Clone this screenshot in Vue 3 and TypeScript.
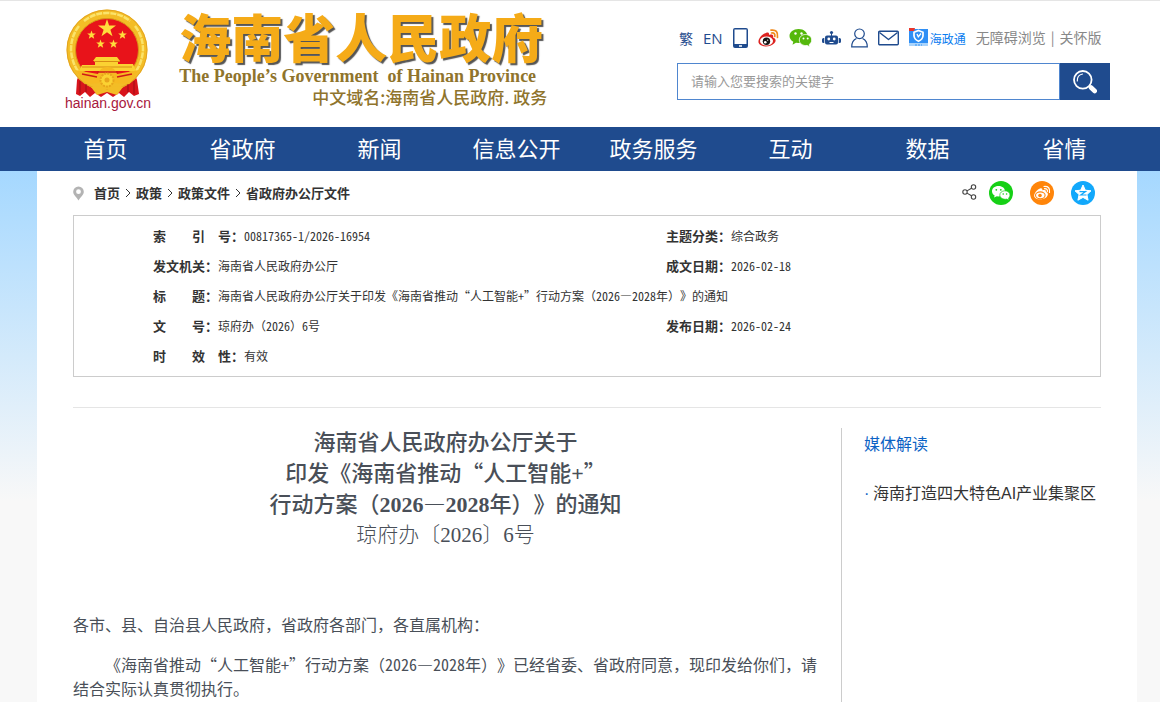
<script setup lang="ts">
import { ref } from 'vue'

interface Field {
  label: string
  value: string
  wide?: boolean
}

interface Run {
  text: string
  latin: boolean
}

const keyword = ref('')

const navItems: string[] = ['首页', '省政府', '新闻', '信息公开', '政务服务', '互动', '数据', '省情']

const crumbs: string[] = ['首页', '政策', '政策文件', '省政府办公厅文件']

const fieldRows: Field[][] = [
  [
    { label: '索　　引　号：', value: '00817365-1/2026-16954' },
    { label: '主题分类：', value: '综合政务' },
  ],
  [
    { label: '发文机关：', value: '海南省人民政府办公厅' },
    { label: '成文日期：', value: '2026-02-18' },
  ],
  [
    {
      label: '标　　题：',
      value: '海南省人民政府办公厅关于印发《海南省推动“人工智能+”行动方案（2026—2028年）》的通知',
      wide: true,
    },
  ],
  [
    { label: '文　　号：', value: '琼府办（2026）6号' },
    { label: '发布日期：', value: '2026-02-24' },
  ],
  [{ label: '时　　效　性：', value: '有效', wide: true }],
]

const titleLines: string[] = [
  '海南省人民政府办公厅关于',
  '印发《海南省推动“人工智能+”',
  '行动方案（2026—2028年）》的通知',
]

const docNumber = '琼府办〔2026〕6号'

const bodyText =
  '《海南省推动“人工智能+”行动方案（2026—2028年）》已经省委、省政府同意，现印发给你们，请结合实际认真贯彻执行。'

// Splits a text into Chinese runs and half-width runs of digits and signs.
function runs(text: string): Run[] {
  return text
    .split(/([0-9+][0-9/-]*)/)
    .filter((part) => part !== '')
    .map((part) => ({ text: part, latin: /^[0-9+]/.test(part) }))
}
</script>

<template>
  <div class="page" lang="zh-CN">
    <header class="header">
      <div class="wrap header-inner">
        <a class="brand" href="#">
          <span class="emblem-box">
            <svg class="emblem" viewBox="65 9 84 88" aria-hidden="true">
              <path d="M80 72 L77 80 L76 94 L80 96 L85 92 L90 97 L95 93 L101 97 L107 93 L113 97 L119 93 L124 97 L129 92 L134 96 L139 94 L137 80 L134 72 Z" fill="#d8141c" />
              <circle cx="107" cy="50" r="35.5" fill="none" stroke="#f3bd26" stroke-width="10" />
              <circle cx="107" cy="50" r="40" fill="none" stroke="#d8931a" stroke-width="1" stroke-opacity="0.6" />
              <path d="M79 26 Q71 36 71 50 Q72 64 80 74 M135 26 Q143 36 143 50 Q142 64 134 74 M84 21 Q94 13 107 13 Q120 13 130 21" fill="none" stroke="#fbe36a" stroke-width="2.500" stroke-dasharray="6 1" />
              <circle cx="107" cy="50" r="31.5" fill="#e8131a" stroke="#d99418" stroke-width="1" />
              <path d="M107 19 L109.1 25.6 L116 25.6 L110.4 29.7 L112.5 36.3 L107 32.2 L101.500 36.300 L103.6 29.7 L98 25.6 L104.900 25.600 Z" fill="#ffdd3c" />
              <g fill="#ffdd3c">
                <path id="small-star" d="M91.500 30.500 L92.600 33.500 L95.800 33.600 L93.300 35.600 L94.200 38.700 L91.500 36.900 L88.800 38.700 L89.700 35.600 L87.200 33.600 L90.400 33.500 Z" />
                <use href="#small-star" x="31" />
                <use href="#small-star" x="9" y="9" />
                <use href="#small-star" x="22" y="9" />
              </g>
              <path d="M96 57 H117 L120 61 H118 V64 H133 L136 71 H79 L82 65 H95 V61 H93 Z" fill="#fbd232" />
              <path d="M94 61.500 H120 M82 67 H132" stroke="#d88d14" stroke-width="1" />
              <path d="M75 70 L98 74 A10 10 0 0 1 117 74 L139 70 L129 84 L114 83 L107 86 L100 83 L86 84 Z" fill="#f6b921" />
              <path d="M97 72 H118 M82 74 L97 77 M132 74 L117 77" stroke="#d01a18" stroke-width="1.500" fill="none" />
              <circle cx="107" cy="80" r="6.500" fill="#fbd232" stroke="#e8a51c" stroke-width="2" stroke-dasharray="2 1" />
              <circle cx="107" cy="80" r="2.500" fill="#e8a51c" />
              <path d="M91 87 L100 86 L107 90 L114 86 L123 87 L117 95 L107 92 L97 95 Z" fill="#f3bd26" />
              <path d="M80 81 V94 M86 84 V92 M128 84 V92 M134 81 V94" stroke="#9d0d14" stroke-width="1" />
            </svg>
            <span class="domain">hainan.gov.cn</span>
          </span>
          <span class="titles">
            <span class="title-zh">海南省人民政府</span>
            <span class="title-en">The People’s Government&nbsp; of Hainan Province</span>
            <span class="title-domain">中文域名:海南省人民政府. 政务</span>
          </span>
        </a>

        <div class="side">
          <div class="tools">
            <a class="tool-zh" href="#">繁</a>
            <a class="tool-en" href="#">EN</a>
            <a href="#" aria-label="移动版">
              <svg width="15" height="20" viewBox="0 0 15 20">
                <path fill="#1f4b8e" fill-rule="evenodd" d="M2 0 H13 Q15 0 15 2 V18 Q15 20 13 20 H2 Q0 20 0 18 V2 Q0 0 2 0 Z M1.500 1.500 V16 H13.500 V1.500 Z M6 17.300 V18.700 H9 V17.300 Z" />
              </svg>
            </a>
            <a href="#" aria-label="微博">
              <svg width="21" height="20" viewBox="0 0 21 20">
                <path d="M8 5 C10 4 11.500 5 11 7 C14 6 16 7 15 9.500 C18 10.500 18.500 13 16 15.500 C12 19.500 2 19.500 0.500 14.500 C0 11 4 6 8 5 Z" fill="#dc2320" />
                <ellipse cx="8.500" cy="13" rx="6.500" ry="4.500" fill="#fff" />
                <circle cx="8.500" cy="13.300" r="3.700" fill="#161616" />
                <circle cx="7.300" cy="14.200" r="1.300" fill="#fff" />
                <circle cx="9.700" cy="12.200" r="0.600" fill="#fff" />
                <path d="M13 2.200 Q20.500 1 19.500 9.500 M13.500 5 Q17.500 4.500 16.800 8.500" fill="none" stroke="#f08a1c" stroke-width="1.700" stroke-linecap="round" />
              </svg>
            </a>
            <a href="#" aria-label="微信">
              <svg width="23" height="20" viewBox="0 0 23 20">
                <path d="M9.500 1 C15 1 18.500 4.500 18.500 8 C18.500 12 15 15 9.500 15 L7 14.700 L3.500 16.800 L4.300 13.700 C2 12.500 0.500 10.400 0.500 8 C0.500 4 4.500 1 9.500 1 Z" fill="#55b80c" />
                <path d="M16.500 6.500 C20 6.500 22.700 8.800 22.700 12 C22.700 14 21.600 15.500 20.300 16.400 L20.800 18.800 L18.200 17.400 C14 18.200 10.300 15.700 10.300 12 C10.300 8.800 13 6.500 16.500 6.500 Z" fill="#55b80c" stroke="#fff" stroke-width="0.800" />
                <g fill="#fff">
                  <circle cx="6.500" cy="5.500" r="1.200" /><circle cx="12.500" cy="5.500" r="1.200" />
                  <circle cx="14.500" cy="10.500" r="1" /><circle cx="18.700" cy="10.500" r="1" />
                </g>
              </svg>
            </a>
            <a href="#" aria-label="智能机器人">
              <svg width="19" height="18" viewBox="0 0 19 18">
                <g fill="#1f4b8e">
                  <circle cx="9.500" cy="3.500" r="1.600" />
                  <path d="M9 4 H10 V7 H9 Z M5 6.500 H14 Q16 6.500 16 8.500 V13.500 Q16 15.500 14 15.500 H5 Q3 15.500 3 13.500 V8.500 Q3 6.500 5 6.500 Z" />
                  <path d="M2.300 9 V14 H1.500 Q0 14 0 12.500 V10.500 Q0 9 1.500 9 Z M16.700 9 H17.500 Q19 9 19 10.500 V12.500 Q19 14 17.500 14 H16.700 Z" />
                </g>
                <g fill="#fff"><circle cx="6.800" cy="10" r="1.400" /><circle cx="12.200" cy="10" r="1.400" /><path d="M7.500 13 H11.500 V14 H7.500 Z" /></g>
              </svg>
            </a>
            <a href="#" aria-label="个人中心">
              <svg width="17" height="20" viewBox="0 0 17 20">
                <g fill="none" stroke="#1f4b8e" stroke-width="1.200">
                  <circle cx="8.500" cy="5.800" r="4.800" />
                  <path d="M5.500 10.500 Q0.700 12.500 0.700 18.900 H16.300 Q16.300 12.500 11.500 10.500" />
                </g>
              </svg>
            </a>
            <a href="#" aria-label="邮箱">
              <svg width="21" height="16" viewBox="0 0 21 16">
                <g fill="none" stroke="#1f4b8e" stroke-width="1.400" stroke-linejoin="round">
                  <rect x="0.700" y="1.200" width="19.600" height="13.600" rx="1" />
                  <path d="M1.500 2.500 L10.500 9.500 L19.500 2.500" />
                </g>
              </svg>
            </a>
            <a class="app-link" href="#">
              <svg width="19" height="20" viewBox="0 0 19 20">
                <rect width="19" height="17" y="1" fill="#2f8ff5" />
                <path d="M0 15 H19 V18 H0 Z" fill="#a9d3fb" />
                <path d="M0 0 H6 L5 3 H0 Z" fill="#e8352c" />
                <path d="M9.500 2.500 L14 4.300 V8 Q13.500 11.500 9.500 13.300 Q5.500 11.500 5 8 V4.300 Z" fill="none" stroke="#fff" stroke-width="1.700" />
                <path d="M8 6 L9.300 8.800 L12 5.500" fill="none" stroke="#fff" stroke-width="1.300" />
                <path d="M6 17 H13" stroke="#5aa9f8" stroke-width="1.500" stroke-dasharray="2 1" />
              </svg>
              <span>海政通</span>
            </a>
            <span class="access"><a href="#">无障碍浏览</a><span>|</span><a href="#">关怀版</a></span>
          </div>

          <form class="search" role="search" @submit.prevent>
            <input v-model="keyword" type="text" placeholder="请输入您要搜索的关键字" aria-label="搜索关键字" />
            <button type="submit" aria-label="搜索">
              <svg width="24" height="24" viewBox="0 0 24 24">
                <circle cx="9.800" cy="9.800" r="8.800" fill="none" stroke="#fff" stroke-width="1.800" />
                <path d="M4.300 11 Q4 5 9.500 4" fill="none" stroke="#fff" stroke-width="1.200" stroke-linecap="round" />
                <path d="M18 17.500 L21.700 21" stroke="#fff" stroke-width="4.600" stroke-linecap="round" />
              </svg>
            </button>
          </form>
        </div>
      </div>
    </header>

    <nav class="nav" aria-label="主导航">
      <div class="wrap nav-inner">
        <a v-for="item in navItems" :key="item" href="#">{{ item }}</a>
      </div>
    </nav>

    <main class="wrap panel">
      <div class="crumb-row">
        <nav class="crumbs" aria-label="当前位置">
          <svg class="pin" width="11" height="15" viewBox="0 0 11 15" aria-hidden="true">
            <path fill="#b3b3b3" fill-rule="evenodd" d="M5.500 0.500 A5.300 5.300 0 0 1 10.800 5.800 C10.800 9 7.500 11 5.500 14.500 C3.500 11 0.200 9 0.200 5.800 A5.300 5.300 0 0 1 5.500 0.500 Z M5.500 3.300 A2.400 2.400 0 1 0 5.500 8.100 A2.400 2.400 0 1 0 5.500 3.300 Z" />
          </svg>
          <template v-for="(crumb, i) in crumbs" :key="crumb">
            <svg v-if="i > 0" class="chevron" width="16" height="10" viewBox="0 0 16 10" aria-hidden="true">
              <path d="M6 1 L10 5 L6 9" fill="none" stroke="#333" />
            </svg>
            <a href="#">{{ crumb }}</a>
          </template>
        </nav>
        <div class="share">
          <svg width="15" height="18" viewBox="0 0 15 18" aria-hidden="true">
            <g fill="none" stroke="#444" stroke-width="1.100">
              <circle cx="3" cy="8" r="2.200" /><circle cx="11.500" cy="3" r="2.200" /><circle cx="11.500" cy="13" r="2.200" />
              <path d="M5 6.900 L9.500 4.200 M5 9.100 L9.500 11.800" />
            </g>
          </svg>
          <div class="share-buttons">
            <button type="button" aria-label="分享到微信">
              <svg width="24" height="24" viewBox="0 0 24 24">
                <circle cx="12" cy="12" r="12" fill="#16d016" />
                <path d="M9.500 5 C13.500 5 16 7.400 16 10.200 C16 13 13.500 15.400 9.500 15.400 L7.800 15.200 L5 16.600 L5.700 14.400 C4 13.500 3 12 3 10.200 C3 7.400 5.500 5 9.500 5 Z" fill="#fff" />
                <path d="M15.800 9.800 C19 9.800 21 11.700 21 14.100 C21 15.400 20.400 16.500 19.500 17.200 L20 19.200 L17.700 18.100 C14 18.900 10.800 16.800 10.800 14.100 C10.800 11.700 12.900 9.800 15.800 9.800 Z" fill="#fff" stroke="#16d016" stroke-width="0.700" />
                <g fill="#16d016">
                  <circle cx="7.300" cy="8.800" r="0.900" /><circle cx="11.800" cy="8.800" r="0.900" />
                  <circle cx="14.200" cy="13" r="0.800" /><circle cx="17.600" cy="13" r="0.800" />
                </g>
              </svg>
            </button>
            <button type="button" aria-label="分享到微博">
              <svg width="24" height="24" viewBox="0 0 24 24">
                <circle cx="12" cy="12" r="12" fill="#ff850a" />
                <path d="M10 7.500 C11.800 6.800 12.700 7.800 12.300 9.300 C15 8.300 16.500 9.200 15.800 11.100 C18.300 11.900 18.500 14 16.700 15.900 C13.500 19.200 5.500 19.300 4.200 15.400 C3.800 12.500 7 8.500 10 7.500 Z" fill="#fff" />
                <ellipse cx="10.300" cy="14.300" rx="4.800" ry="3.400" fill="none" stroke="#ff850a" stroke-width="1.100" />
                <circle cx="10" cy="14.500" r="1.800" fill="#ff850a" />
                <path d="M14 5.500 Q20.500 5 19.500 11.500 M14.500 7.700 Q18 7.500 17.300 10.700" fill="none" stroke="#fff" stroke-width="1.200" stroke-linecap="round" />
              </svg>
            </button>
            <button type="button" aria-label="分享到QQ空间">
              <svg width="24" height="24" viewBox="0 0 24 24">
                <circle cx="12" cy="12" r="12" fill="#12a8fb" />
                <path d="M12 4 L14.300 9.200 L20 9.800 L15.900 13.600 L17.100 19.200 L12 16.400 L6.900 19.200 L8.100 13.600 L4 9.800 L9.700 9.200 Z" fill="#fff" stroke="#fff" stroke-linejoin="round" />
                <path d="M8.500 10.600 H14.500 L9.800 14 H15.500" fill="none" stroke="#12a8fb" stroke-width="1.200" />
              </svg>
            </button>
          </div>
        </div>
      </div>

      <table class="info">
        <tbody>
          <tr v-for="(row, r) in fieldRows" :key="r">
            <td v-for="field in row" :key="field.label" :colspan="field.wide ? 2 : 1">
              <b>{{ field.label }}</b><template v-for="(run, i) in runs(field.value)" :key="i"><span v-if="run.latin" class="half">{{ run.text }}</span><template v-else>{{ run.text }}</template></template>
            </td>
          </tr>
        </tbody>
      </table>

      <div class="content">
        <article class="article">
          <h1>
            <span v-for="line in titleLines" :key="line" class="title-line"><template v-for="(run, i) in runs(line)" :key="i"><span v-if="run.latin" class="serif">{{ run.text }}</span><template v-else>{{ run.text }}</template></template></span>
          </h1>
          <p class="doc-no"><template v-for="(run, i) in runs(docNumber)" :key="i"><span v-if="run.latin" class="serif">{{ run.text }}</span><template v-else>{{ run.text }}</template></template></p>
          <div class="body">
            <p>各市、县、自治县人民政府，省政府各部门，各直属机构：</p>
            <p class="indent"><template v-for="(run, i) in runs(bodyText)" :key="i"><span v-if="run.latin" class="half">{{ run.text }}</span><template v-else>{{ run.text }}</template></template></p>
          </div>
        </article>
        <aside class="related">
          <h2>媒体解读</h2>
          <ul>
            <li><a href="#">海南打造四大特色AI产业集聚区</a></li>
          </ul>
        </aside>
      </div>
    </main>
  </div>
</template>

<style>
body {
  margin: 0;
  background: #f8f8f8;
}
</style>

<style scoped>
.page {
  min-height: 100vh;
  display: flex;
  flex-direction: column;
  box-sizing: border-box;
  background: #f8f8f8 linear-gradient(#a5d8ff, #f8f8f8) 0 171px / 100% 330px no-repeat;
  font-family: "Liberation Sans", "Noto Sans CJK SC", sans-serif;
  color: #333;
  text-spacing-trim: space-all;
}

a {
  color: inherit;
  text-decoration: none;
}

svg {
  display: block;
}

.wrap {
  margin: 0 23px 0 37px;
}

.header {
  background: #fff;
  border-top: 1px solid #e5e5e5;
}

.header-inner {
  display: flex;
  justify-content: space-between;
  height: 126px;
  padding: 0 27px 0 28px;
}

.brand {
  display: flex;
  gap: 28px;
  padding-top: 8px;
}

.emblem-box {
  display: flex;
  flex-direction: column;
}

.emblem {
  width: 84px;
  height: 88px;
}

.domain {
  margin-top: -2px;
  font-size: 14px;
  line-height: 16px;
  color: #a8173c;
}

.titles {
  display: flex;
  flex-direction: column;
  width: 368px;
  white-space: nowrap;
}

.title-zh {
  font: 900 52px/54px "Noto Sans CJK SC", sans-serif;
  color: #f5ab18;
  text-shadow: 2px 2px 1px #555;
}

.title-en {
  font: bold 18px/26px "Liberation Serif", serif;
  color: #8f742c;
}

.title-domain {
  align-self: flex-end;
  font: 500 17px/16px "Noto Sans CJK SC", sans-serif;
  color: #8f742c;
}

.side {
  width: 433px;
  padding-top: 25px;
}

.tools {
  display: flex;
  align-items: center;
  gap: 10px;
  height: 24px;
  padding-left: 2px;
  white-space: nowrap;
}

.tool-zh {
  font-size: 14px;
  color: #1f4b8e;
}

.tool-en {
  font: 15px/24px "Open Sans", sans-serif;
  color: #1f4b8e;
}

.app-link {
  display: flex;
  align-items: center;
  gap: 2px;
  font-size: 12px;
  color: #0a7df0;
}

.access {
  display: flex;
  gap: 5px;
  font: 14px/20px "Noto Sans CJK SC", sans-serif;
  padding-bottom: 2px;
  color: #888;
}

.search {
  display: flex;
  height: 37px;
  margin-top: 13px;
}

.search input {
  flex: 1;
  min-width: 0;
  box-sizing: border-box;
  padding: 0 13px 2px;
  border: 1px solid #4f86cf;
  border-radius: 0;
  font: 13px "Noto Sans CJK SC", sans-serif;
  color: #333;
  outline: none;
}

.search input::placeholder {
  color: #999;
}

.search button {
  display: grid;
  place-items: center;
  width: 50px;
  padding: 0;
  border: 0;
  background: #1f4b8e;
}

.nav {
  background: #1f4b8e;
}

.nav-inner {
  display: grid;
  grid-template-columns: repeat(8, 1fr);
  padding: 0 4px 4px 0;
}

.nav-inner a {
  font: 22px/40px "Noto Sans CJK SC", sans-serif;
  color: #fff;
  text-align: center;
}

.panel {
  flex: 1;
  display: flex;
  flex-direction: column;
  box-sizing: border-box;
  padding: 0 36px;
  background: #fff;
}

.crumb-row {
  display: flex;
  align-items: center;
  justify-content: space-between;
  height: 44px;
  padding-right: 6px;
}

.crumbs {
  display: flex;
  align-items: center;
  font: bold 13px/20px "Noto Sans CJK SC", sans-serif;
}

.pin {
  margin-right: 10px;
}

.share,
.share-buttons {
  display: flex;
  align-items: center;
  gap: 12px;
}

.share-buttons {
  gap: 17px;
}

.share button {
  padding: 0;
  border: 0;
  background: none;
}

.info {
  display: block;
  padding: 5px 0;
  border: 1px solid #ccc;
  border-collapse: collapse;
  font-family: "Noto Sans CJK SC", sans-serif;
}

.info tbody {
  display: block;
}

.info tr {
  display: flex;
  height: 30px;
}

.info td {
  flex: 1;
  padding: 0 0 0 79px;
  font-size: 12px;
  line-height: 30px;
  white-space: nowrap;
}

.info b {
  font-size: 13px;
}

.half {
  font-feature-settings: "hwid";
}

.serif {
  font-family: "Liberation Serif", serif;
  line-height: 1;
}

.content {
  flex: 1;
  display: flex;
  gap: 23px;
  margin-top: 30px;
  padding-top: 17px;
  border-top: 1px solid #e5e5e5;
}

.article {
  flex: 1;
  font-family: "Noto Sans CJK SC", sans-serif;
  color: #494f58;
}

.article h1,
.doc-no {
  margin: 0;
  font-size: 22px;
  font-weight: 500;
  line-height: 31px;
  text-align: center;
}

.article h1 .serif {
  font-weight: 700;
}

.title-line {
  display: block;
}

.doc-no {
  font-size: 21px;
  font-weight: 300;
}

.body {
  margin-top: 63px;
  font-size: 16px;
  line-height: 24px;
}

.body p {
  margin: 0 0 16px;
}

.body p:last-child {
  margin-bottom: 0;
}

.indent {
  text-indent: 2em;
}

.related {
  box-sizing: border-box;
  width: 260px;
  margin-top: 3px;
  padding: 3px 0 0 22px;
  border-left: 1px solid #ccc;
  font-family: "Noto Sans CJK SC", sans-serif;
  white-space: nowrap;
}

.related h2 {
  margin: 0;
  font-size: 16px;
  font-weight: 400;
  line-height: 24px;
  color: #0b62c4;
}

.related ul {
  margin: 27px 0 0;
  padding: 0;
  list-style: none;
}

.related li {
  display: flex;
  font-family: "Liberation Sans", "Noto Sans CJK SC", sans-serif;
  font-size: 16px;
  line-height: 24px;
}

.related li::before {
  content: "·";
  width: 9px;
  color: #0b62c4;
}
</style>
